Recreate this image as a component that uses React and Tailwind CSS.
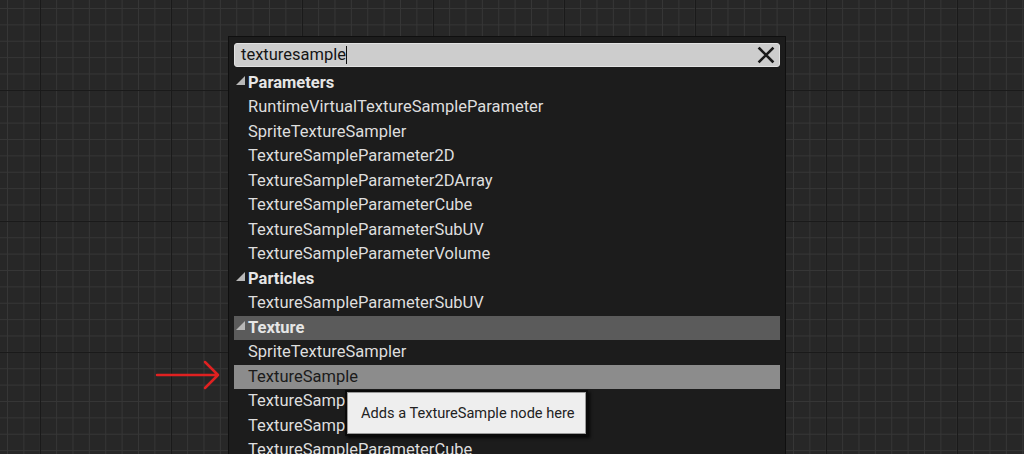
import React from 'react';

const font = { fontFamily: 'Roboto, "Noto Sans", sans-serif' };

const groups = [
  {
    name: 'Parameters',
    items: [
      'RuntimeVirtualTextureSampleParameter',
      'SpriteTextureSampler',
      'TextureSampleParameter2D',
      'TextureSampleParameter2DArray',
      'TextureSampleParameterCube',
      'TextureSampleParameterSubUV',
      'TextureSampleParameterVolume',
    ],
  },
  { name: 'Particles', items: ['TextureSampleParameterSubUV'] },
  {
    name: 'Texture',
    active: true,
    items: [
      'SpriteTextureSampler',
      'TextureSample',
      'TextureSampleParameter2D',
      'TextureSampleParameter2DArray',
      'TextureSampleParameterCube',
    ],
  },
];

const Triangle = () => (
  <svg width="9" height="9" viewBox="0 0 9 9" className="mb-[5px] shrink-0">
    <path d="M0 9 L9 0 L9 9 Z" fill="#b8b8b8" />
  </svg>
);

const App = () => {
  return (
    <div
      style={font}
      className="relative w-[1024px] h-[454px] overflow-hidden bg-[#272727] bg-[linear-gradient(to_right,#1a1a1a_1px,transparent_1px),linear-gradient(to_bottom,#1a1a1a_1px,transparent_1px),linear-gradient(to_right,#363636_1px,transparent_1px),linear-gradient(to_bottom,#363636_1px,transparent_1px)] bg-[size:131px_131px,131px_131px,16.375px_16.375px,16.375px_16.375px] bg-[position:40px_90px,40px_90px,7px_8px,7px_8px]"
    >
      {/* search popup */}
      <div className="absolute left-[228px] top-[36px] w-[558px] h-[430px] bg-[#1c1c1c] border border-[#0f0f0f] px-[5px] pt-[6px]">
        <div className="h-[24px] flex items-center rounded-[3px] bg-[#cdcdcd] border border-[#e2e2e2] pl-[6px] pr-[4px]">
          <span className="text-[16.5px] text-[#151515] leading-none">texturesample</span>
          <span className="w-px h-[18px] bg-[#111]" />
          <div className="flex-1" />
          <svg width="18" height="18" viewBox="0 0 18 18">
            <path d="M2.5 2.5 L15.5 15.5 M15.5 2.5 L2.5 15.5" stroke="#1a1a1a" strokeWidth="2.6" strokeLinecap="square" />
          </svg>
        </div>

        <div className="mt-[3.5px] flex flex-col">
          {groups.map((g) => (
            <React.Fragment key={g.name}>
              <div
                className={`h-[24.5px] flex items-center pl-[2px] gap-[3px] ${g.active ? 'bg-[#5b5b5b]' : ''}`}
              >
                <Triangle />
                <span className="text-[16.5px] font-bold text-[#e6e6e6] leading-none whitespace-nowrap">{g.name}</span>
              </div>
              {g.items.map((it) => (
                <div
                  key={g.name + it}
                  className={`h-[24.5px] flex items-center pl-[14px] ${
                    it === 'TextureSample' ? 'bg-[#8c8c8c] text-[#1b1b1b]' : 'text-[#dedede]'
                  }`}
                >
                  <span className="text-[16.5px] leading-none whitespace-nowrap">{it}</span>
                </div>
              ))}
            </React.Fragment>
          ))}
        </div>
      </div>

      {/* tooltip */}
      <div className="absolute left-[347px] top-[392px] w-[239px] h-[42px] bg-[#eeeeee] border border-[#9a9a9a] shadow-[0_0_0_2px_#0a0a0a,2px_2px_3px_2px_rgba(0,0,0,0.8)] flex items-center pl-[13px]">
        <span className="text-[14.6px] text-[#222] leading-none whitespace-nowrap">Adds a TextureSample node here</span>
      </div>

      {/* red arrow */}
      <svg className="absolute left-[150px] top-[355px]" width="80" height="40" viewBox="0 0 80 40">
        <path d="M7 20 L68 20 M55 7 L68 20 L55 33" stroke="#e02121" strokeWidth="2.5" fill="none" strokeLinecap="round" strokeLinejoin="round" />
      </svg>
    </div>
  );
};

export default App;
